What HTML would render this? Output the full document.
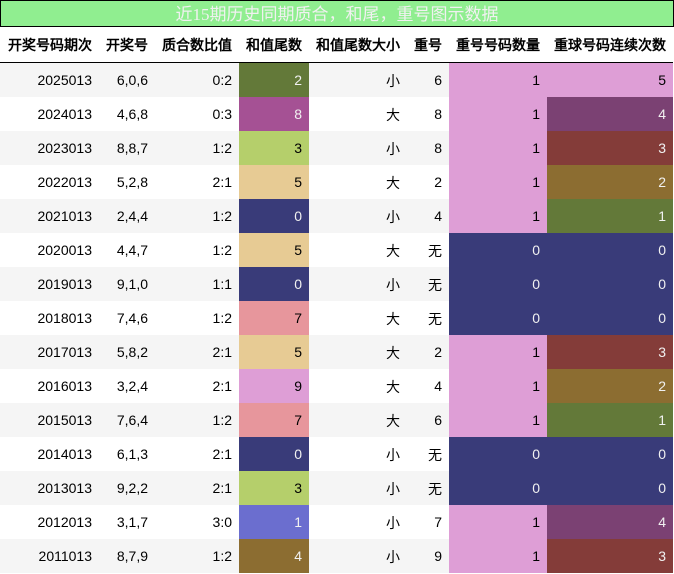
<!DOCTYPE html>
<html><head><meta charset="utf-8"><style>
html,body{margin:0;padding:0;background:#fff;width:674px;height:574px;overflow:hidden}
body{font-family:"Liberation Sans","WenQuanYi Zen Hei",sans-serif;font-size:14px;color:#000}
.t{position:absolute;left:0;top:0;width:672px;height:25px;border:1px solid #000;background:#90ee90;color:#f1f1f1;font-family:"Liberation Serif","WenQuanYi Zen Hei",serif;font-size:17px;line-height:27px;text-align:center;white-space:nowrap}
table{position:absolute;left:0;top:27px;width:673px;table-layout:fixed;border-collapse:separate;border-spacing:0}
th,td{padding:0 7px;text-align:right;white-space:nowrap;overflow:hidden;box-sizing:border-box}
th{height:36px;border-bottom:1px solid #000;font-weight:bold;line-height:34px;padding-top:1px}
td{height:34px;line-height:34px}
td:nth-child(5),td.n{padding-top:2px;line-height:32px}
tbody tr:nth-child(odd){background:#f5f5f5}
.w{color:#f1f1f1}
.a{background:#393b79}.b{background:#6b6ecf}.c{background:#637939}.d{background:#b5cf6b}.e{background:#8c6d31}.f{background:#e7cb94}.g{background:#e7969c}.h{background:#a55194}.i{background:#de9ed6}.j{background:#843c39}.k{background:#7b4173}
</style></head><body>
<div class="t">近15期历史同期质合，和尾，重号图示数据</div>
<table>
<colgroup><col style="width:99px"><col style="width:56px"><col style="width:84px"><col style="width:70px"><col style="width:98px"><col style="width:42px"><col style="width:98px"><col style="width:126px"></colgroup>
<thead><tr><th>开奖号码期次</th><th>开奖号</th><th>质合数比值</th><th>和值尾数</th><th>和值尾数大小</th><th>重号</th><th>重号号码数量</th><th>重球号码连续次数</th></tr></thead>
<tbody>
<tr><td>2025013</td><td>6,0,6</td><td>0:2</td><td class="c w">2</td><td>小</td><td>6</td><td class="i">1</td><td class="i">5</td></tr>
<tr><td>2024013</td><td>4,6,8</td><td>0:3</td><td class="h w">8</td><td>大</td><td>8</td><td class="i">1</td><td class="k w">4</td></tr>
<tr><td>2023013</td><td>8,8,7</td><td>1:2</td><td class="d">3</td><td>小</td><td>8</td><td class="i">1</td><td class="j w">3</td></tr>
<tr><td>2022013</td><td>5,2,8</td><td>2:1</td><td class="f">5</td><td>大</td><td>2</td><td class="i">1</td><td class="e w">2</td></tr>
<tr><td>2021013</td><td>2,4,4</td><td>1:2</td><td class="a w">0</td><td>小</td><td>4</td><td class="i">1</td><td class="c w">1</td></tr>
<tr><td>2020013</td><td>4,4,7</td><td>1:2</td><td class="f">5</td><td>大</td><td class="n">无</td><td class="a w">0</td><td class="a w">0</td></tr>
<tr><td>2019013</td><td>9,1,0</td><td>1:1</td><td class="a w">0</td><td>小</td><td class="n">无</td><td class="a w">0</td><td class="a w">0</td></tr>
<tr><td>2018013</td><td>7,4,6</td><td>1:2</td><td class="g">7</td><td>大</td><td class="n">无</td><td class="a w">0</td><td class="a w">0</td></tr>
<tr><td>2017013</td><td>5,8,2</td><td>2:1</td><td class="f">5</td><td>大</td><td>2</td><td class="i">1</td><td class="j w">3</td></tr>
<tr><td>2016013</td><td>3,2,4</td><td>2:1</td><td class="i">9</td><td>大</td><td>4</td><td class="i">1</td><td class="e w">2</td></tr>
<tr><td>2015013</td><td>7,6,4</td><td>1:2</td><td class="g">7</td><td>大</td><td>6</td><td class="i">1</td><td class="c w">1</td></tr>
<tr><td>2014013</td><td>6,1,3</td><td>2:1</td><td class="a w">0</td><td>小</td><td class="n">无</td><td class="a w">0</td><td class="a w">0</td></tr>
<tr><td>2013013</td><td>9,2,2</td><td>2:1</td><td class="d">3</td><td>小</td><td class="n">无</td><td class="a w">0</td><td class="a w">0</td></tr>
<tr><td>2012013</td><td>3,1,7</td><td>3:0</td><td class="b w">1</td><td>小</td><td>7</td><td class="i">1</td><td class="k w">4</td></tr>
<tr><td>2011013</td><td>8,7,9</td><td>1:2</td><td class="e w">4</td><td>小</td><td>9</td><td class="i">1</td><td class="j w">3</td></tr>
</tbody></table>
</body></html>
